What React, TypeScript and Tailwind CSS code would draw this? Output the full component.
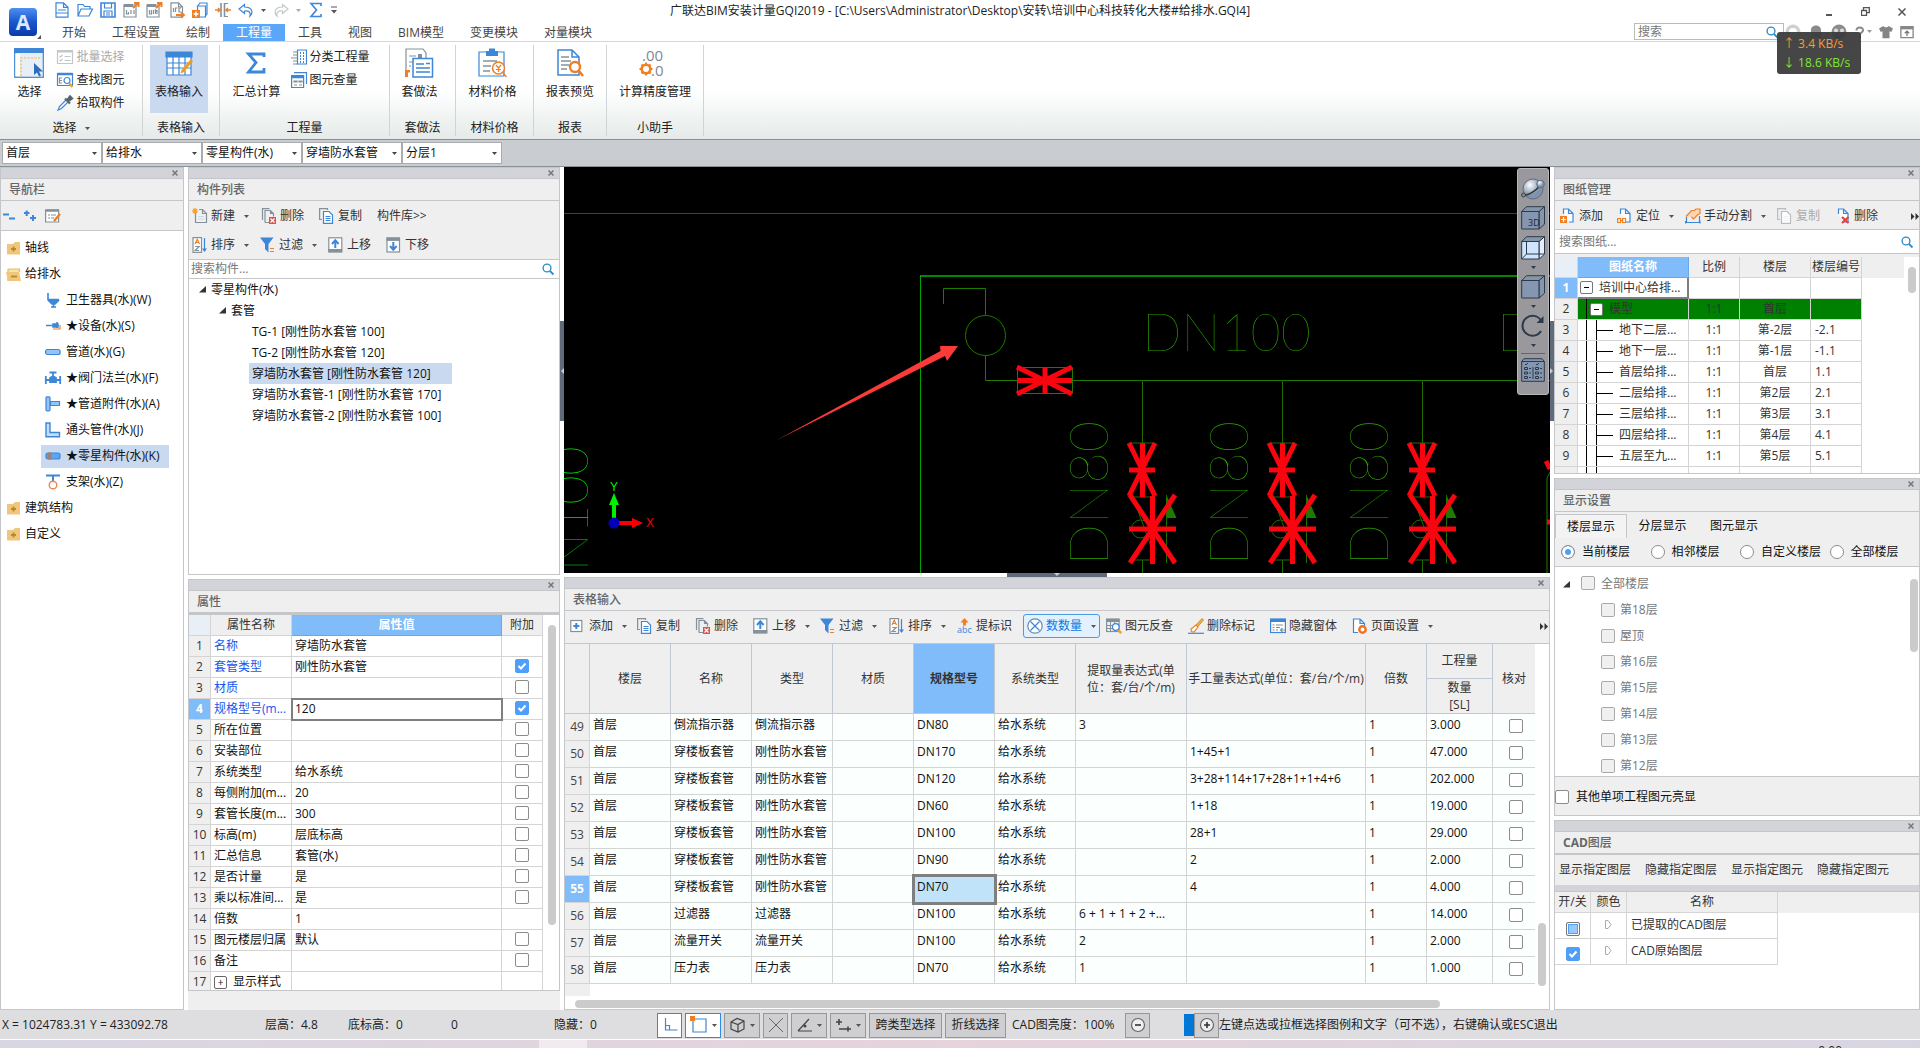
import React from 'react';

const BLUE = '#3d86d8';
const GRAY = '#84919a';
const ORANGE = '#f07f24';

interface IconProps {
  size?: number;
  box?: number;
  children: React.ReactNode;
}

const Icon = ({ size = 16, box = 16, children }: IconProps) => (
  <svg width={size} height={size} viewBox={`0 0 ${box} ${box}`} fill="none" strokeWidth="1.2" className="shrink-0 overflow-visible" aria-hidden="true">
    {children}
  </svg>
);

// ---------- toolbar icons ----------

const NewIcon = () => (
  <Icon>
    <path d="M3.500 5V14.500h11V5.500L10.500 1.500H7M10.500 1.500v4h4" stroke={GRAY} fill="#eef0f5" />
    <path d="M6 8.500h6M6 11h6" stroke="#d4d8dc" />
    <path d="M3 0v6M0 3h6M1 1l4 4M5 1L1 5" stroke="#f5a11c" />
  </Icon>
);

const DeleteIcon = () => (
  <Icon>
    <path d="M1.500 12V.600h7M4 14.500V2.500h5.500l3 3v3M9.500 2.500v3h3M4 14.500H8" stroke={GRAY} />
    <rect x="8" y="9" width="7" height="7" fill="#d9534f" />
    <path d="M9.500 10.500l4 4M13.500 10.500l-4 4" stroke="#fff" />
  </Icon>
);

const CopyIcon = ({ muted = false }: { muted?: boolean }) => (
  <Icon>
    <path d="M3 11.500H.600V.600H8.500V2" stroke={muted ? '#b9bdc0' : GRAY} />
    <path d="M4.500 3.500h5.500l3.500 3.500v8.400h-9z" stroke={muted ? '#b9bdc0' : BLUE} fill="#fff" />
    <path d="M6.500 8.500h5M6.500 10.500h5M6.500 12.500h5" stroke={muted ? '#efefef' : BLUE} />
  </Icon>
);

const SortIcon = () => (
  <Icon>
    <rect x="1" y=".6" width="8.500" height="14.800" stroke={GRAY} fill="#fff" />
    <path d="M3 7l2.200-4.800L7.500 7M3.800 5.500h3" stroke={ORANGE} />
    <path d="M3.200 9.500h4l-4 4h4" stroke={GRAY} />
    <path d="M12.500 1v13" stroke={BLUE} />
    <path d="M10 11.500h5L12.500 15z" fill={BLUE} />
  </Icon>
);

const FilterIcon = () => (
  <Icon>
    <path d="M0 .5h13.500L8.500 7v8.500L5 12V7z" fill={BLUE} />
    <path d="M10 11.500h4M10 14.500h4" stroke={ORANGE} />
  </Icon>
);

const UpIcon = () => (
  <Icon>
    <rect x=".8" y=".8" width="13" height="14" stroke={GRAY} fill="#fff" />
    <path d="M.2 12h14v3.400H.2z" fill={GRAY} />
    <path d="M7.300 11V4M4 7l3.300-3.800L10.600 7" stroke={BLUE} strokeWidth="2" />
  </Icon>
);

const DownIcon = () => (
  <Icon>
    <rect x="1" y="1" width="12.500" height="14" stroke={GRAY} fill="#fff" />
    <path d="M.5.500h13.500v3.400H.500z" fill={GRAY} />
    <path d="M7.300 5v7M4 9l3.300 3.800L10.600 9" stroke={BLUE} strokeWidth="2" />
  </Icon>
);

const AddBoxIcon = () => (
  <Icon>
    <rect x=".8" y="2.500" width="11" height="11" stroke={GRAY} fill="#fff" />
    <path d="M6.300 5v6M3.300 8h6" stroke={BLUE} strokeWidth="2" />
  </Icon>
);

const MarkIcon = () => (
  <Icon>
    <path d="M3.500 4.500L7.500 0l4 4.500H9v3H6v-3z" fill={ORANGE} />
    <text x="0" y="15" fontSize="9" fill={BLUE} strokeWidth="0" fontFamily="Open Sans">abc</text>
  </Icon>
);

const CountIcon = () => (
  <Icon>
    <circle cx="8" cy="8" r="7.200" stroke="#6f8ba3" fill="#fff" />
    <path d="M3.500 3.500l9 9M12.500 3.500l-9 9" stroke={BLUE} />
  </Icon>
);

const TableFindIcon = () => (
  <Icon>
    <rect x=".6" y="1" width="12.500" height="12.500" stroke={GRAY} />
    <path d="M.5 1h13v3H.5z" fill={GRAY} />
    <path d="M.5 7.500h12M.5 10.500h12M4.500 2v11M8.700 2v11" stroke={GRAY} strokeWidth="1" />
    <circle cx="9.800" cy="9" r="3.300" stroke={BLUE} fill="#fff" />
    <path d="M12.200 12l3 3.200" stroke="#f5a11c" strokeWidth="2.500" />
  </Icon>
);

const BrushIcon = () => (
  <Icon>
    <path d="M0 15.300h16" stroke={BLUE} />
    <path d="M8 7l6-6.500 1.500 1.500L9.500 9z" fill="#f5b12c" stroke="#b1772c" strokeWidth=".7" />
    <path d="M3 11l5-4 2 2-4 5-2.500-.5z" fill="#fff" stroke={ORANGE} />
  </Icon>
);

const HideIcon = () => (
  <Icon>
    <rect x=".6" y="1" width="14.800" height="13.500" stroke={BLUE} fill="#fff" />
    <path d="M.5 1h15v3H.5z" fill={BLUE} />
    <path d="M2.500 7h2M6 7h7M2.500 9.500h2M6 9.500h4M2.500 12h2M6 12h2M15 12h-4M12.500 10l-2 2 2 2" stroke={GRAY} />
  </Icon>
);

const PageSetIcon = () => (
  <Icon>
    <path d="M6 14.500H1.500V1H8l4.500 4.500V8M8 1v4.500h4.500" stroke={BLUE} fill="#fff" />
    <circle cx="10.500" cy="11.500" r="3.200" stroke="#f2701d" strokeWidth="2.400" fill="#fff" />
  </Icon>
);

const SheetIcon = ({ kind }: { kind: 'add' | 'locate' | 'remove' }) => (
  <Icon>
    <path d="M3.500 6V1h5l4.500 4.500v8.500H9M8.500 1v4.500H13" stroke={BLUE} fill="#fff" />
    {kind === 'add' && <><path d="M0 8h7v7H0z" fill={ORANGE} /><path d="M3.500 9v5M1 11.500h5" stroke="#fff" /></>}
    {kind === 'locate' && <path d="M.6 10.500h3v4h-3zM5.600 10.500h3v4h-3zM3 12.500h3" stroke={ORANGE} />}
    {kind === 'remove' && <path d="M7 9l6.500 6M13.500 9L7 15" stroke="#e5403b" strokeWidth="2.200" />}
  </Icon>
);

const SplitIcon = () => (
  <Icon>
    <path d="M1.500 9v5.500h13V8" stroke={BLUE} />
    <path d="M0 14.500h15.500M.6 13v2.500M15 13v2.500" stroke={BLUE} />
    <path d="M1 8.500L6.500 2.500h3L11 1h4v4.500L12.500 7l-4 4-2-2" fill="#fbd5b5" stroke={ORANGE} />
  </Icon>
);

const SearchIcon = () => (
  <Icon size={12} box={12}>
    <circle cx="5" cy="5" r="3.900" stroke="#2f8cc9" strokeWidth="1.400" />
    <path d="M8 8l3.500 3.500" stroke="#2f8cc9" strokeWidth="1.800" />
  </Icon>
);

const Caret = ({ color = '#555' }: { color?: string }) => (
  <svg width="5" height="3" viewBox="0 0 5 3" className="shrink-0" aria-hidden="true"><path d="M0 0h5L2.500 3z" fill={color} /></svg>
);

const TreeArrow = () => (
  <svg width="7" height="7" viewBox="0 0 7 7" className="shrink-0" aria-hidden="true"><path d="M7 0v6.500H0z" fill="#333" /></svg>
);

const MoreIcon = () => (
  <svg width="8" height="7" viewBox="0 0 8 7" className="shrink-0" aria-hidden="true"><path d="M0 0l3.500 3.500L0 7zM4.500 0L8 3.500 4.500 7z" fill="#333" /></svg>
);

// ---------- shared pieces ----------

interface PanelProps {
  title: React.ReactNode;
  className?: string;
  children: React.ReactNode;
}

const Panel = ({ title, className = '', children }: PanelProps) => (
  <section className={`flex min-h-0 flex-col overflow-hidden border border-[#c4c6ca] bg-[#efefef] ${className}`}>
    <div className="flex h-[11px] shrink-0 items-center justify-end border-b border-[#c4c6ca] bg-[#d3d4da] pr-[5px]">
      <button type="button" aria-label="关闭">
        <svg width="6" height="6" viewBox="0 0 6 6"><path d="M.5.500l5 5M5.500.500l-5 5" stroke="#777" strokeWidth="1.500" /></svg>
      </button>
    </div>
    <h2 className="h-[22px] shrink-0 border-b border-[#c4c6ca] pl-2 font-medium leading-[21px] text-[#666]">{title}</h2>
    {children}
  </section>
);

interface ToolProps {
  icon?: React.ReactNode;
  label: string;
  width: string;
  caret?: boolean;
  disabled?: boolean;
}

const Tool = ({ icon, label, width, caret, disabled }: ToolProps) => (
  <button type="button" disabled={disabled} className={`flex h-6 shrink-0 items-center gap-[3px] whitespace-nowrap ${disabled ? 'text-[#aaa]' : 'text-[#333]'} ${width}`}>
    {icon}
    {label}
    {caret && <span className="pl-[6px]"><Caret /></span>}
  </button>
);

interface CheckProps {
  label: string;
  on?: boolean;
  disabled?: boolean;
}

const Check = ({ label, on = false, disabled = false }: CheckProps) => (
  <span className="relative inline-block size-3.5 shrink-0 align-top">
    <input
      type="checkbox"
      aria-label={label}
      defaultChecked={on}
      disabled={disabled}
      className="peer block size-3.5 appearance-none rounded-[2px] border border-[#8c8c8c] bg-white checked:border-[#4e9ffa] checked:bg-[#4e9ffa] disabled:border-[#aaa] disabled:bg-[#f0f0f0]"
    />
    <svg className="pointer-events-none absolute inset-0 hidden peer-checked:block" width="14" height="14" viewBox="0 0 14 14">
      <path d="M3.500 7L6 9.500l4.500-5" stroke="#fff" strokeWidth="2" fill="none" />
    </svg>
  </span>
);

// ---------- header ----------

const quickIcons = [
  <Icon key="new"><path d="M2 .8h7.500L14 5.300v9.900H2zM9.500.8v4.500H14M4 8h8M2 11h12" stroke={BLUE} /></Icon>,
  <Icon key="open"><path d="M1 14V2.500h5l1.500 2H13V7M1 14L4 7h11.500L12 14z" stroke={BLUE} /></Icon>,
  <Icon key="save"><path d="M1 1h14v14H1z" stroke={BLUE} strokeWidth="1.600" /><path d="M4.500 1v5h7V1M4 15V9h8v6M6 11h4M6 13h4" stroke={BLUE} /></Icon>,
  <Icon key="gqi"><path d="M1 3h12v12H1z" stroke={GRAY} fill="#fff" /><path d="M1 2h9v3H1z" fill={GRAY} /><path d="M3.500 8v4h2v-2M8 8v4M11 8v4" stroke={GRAY} /><path d="M10 6l4.500-4.500M11 1h4.500v4" stroke={ORANGE} strokeWidth="2" /></Icon>,
  <Icon key="bim"><path d="M1 3h12v12H1z" stroke={GRAY} fill="#fff" /><path d="M1 2h9v3H1z" fill={GRAY} /><path d="M3.500 8v4h2v-4M7.500 8v4M9.500 12V8l1.500 2V8v4" stroke={GRAY} /><path d="M10 6l4.500-4.500M11 1h4.500v4" stroke={ORANGE} strokeWidth="2" /></Icon>,
  <Icon key="ifc"><path d="M2 .8h7.500l4 4v10.400H2zM9.500.8v4h4" stroke={GRAY} /><path d="M4.500 6v4M6.500 10V6h2M12 6h-2v4h2" stroke={GRAY} /><path d="M7 13h7M12 10.500l3 2.500-3 2.500" stroke={ORANGE} strokeWidth="1.800" /></Icon>,
  <Icon key="cube"><path d="M6 3.500L8 1h7v11l-2 2.500M5.500 4h8v11h-8z" stroke={BLUE} fill="#fff" /><path d="M0 8h8v8H0z" fill={ORANGE} /><path d="M4 9.500v5M1.500 12h5" stroke="#fff" strokeWidth="1.500" /></Icon>,
  <Icon key="split"><path d="M6 1v14M9.500 1v14" stroke={GRAY} strokeWidth="1.600" /><path d="M0 8h5M3 6l2 2-2 2M16 8h-5M13 6l-2 2 2 2" stroke={ORANGE} strokeWidth="1.500" /><path d="M10 1.500h3M10 14.500h3" stroke={GRAY} /></Icon>,
];

const UndoIcon = ({ color, flip }: { color: string; flip?: boolean }) => (
  <Icon>
    <path d={flip ? 'M9.500 2.500L15 7l-5.500 4.500V9C5 8.500 3 10.500 4 14 0 10 2.500 5 9.500 5z' : 'M6.500 2.500L1 7l5.500 4.500V9c4.500-.5 6.500 1.500 5.500 5 4-4 1.500-9-5.500-9z'} stroke={color} />
  </Icon>
);

const tabs = ['开始', '工程设置', '绘制', '工程量', '工具', '视图', 'BIM模型', '变更模块', '对量模块'];

const Header = () => (
  <header className="relative flex h-[42px] items-stretch border-b border-[#d5d7d9] bg-white">
    <div className="relative w-[45px] shrink-0 pl-[9px] pt-2">
      <svg width="28" height="28" viewBox="0 0 28 28">
        <defs>
          <linearGradient id="logo" x1="0" y1="0" x2="0" y2="1"><stop offset="0" stopColor="#4f8ff0" /><stop offset=".5" stopColor="#1a56cf" /><stop offset="1" stopColor="#0c3aa6" /></linearGradient>
        </defs>
        <rect width="28" height="28" rx="4" fill="url(#logo)" />
        <text x="14" y="21.500" textAnchor="middle" fontSize="21" fontWeight="700" fill="#dceaff" fontFamily="Open Sans">A</text>
      </svg>
      <svg width="4" height="4" viewBox="0 0 4 4" className="absolute bottom-[2px] right-1"><path d="M4 0v4H0z" fill="#555" /></svg>
    </div>
    <div className="flex flex-col">
      <div className="flex h-6 items-center gap-[7px] pb-1 pl-[9px]">
        {quickIcons}
        <UndoIcon color={BLUE} />
        <Caret />
        <UndoIcon color="#c3c7ca" flip />
        <Caret color="#aaa" />
        <Icon><path d="M13 4V1.500H3L8.500 8 3 14.500h10V12" stroke={BLUE} strokeWidth="1.600" /></Icon>
        <svg width="6" height="8" viewBox="0 0 6 8"><path d="M0 1h6" stroke="#555" /><path d="M0 4h6L3 7.500z" fill="#555" /></svg>
      </div>
      <nav className="flex pl-1">
        {tabs.map((tab) => (
          <a key={tab} href="#" className={`px-[13px] leading-[17px] ${tab === '工程量' ? 'bg-[#5aa6f8] text-white' : 'text-[#444]'}`}>{tab}</a>
        ))}
      </nav>
    </div>
    <h1 className="absolute left-1/2 top-[2px] -translate-x-1/2 whitespace-nowrap leading-[18px] text-[#222]">
      广联达BIM安装计量GQI2019 - [C:\Users\Administrator\Desktop\安转\培训中心科技转化大楼#给排水.GQI4]
    </h1>
    <div className="ml-auto flex flex-col items-end pr-[6px]">
      <div className="flex h-[23px] items-center gap-7 pr-2 text-[#666]">
        <button type="button" aria-label="最小化"><svg width="8" height="10" viewBox="0 0 8 10"><path d="M1 8h6" stroke="#555" strokeWidth="2" /></svg></button>
        <button type="button" aria-label="还原"><svg width="9" height="9" viewBox="0 0 9 9"><path d="M.5 3.500h5v5h-5zM2.500 3V.700h5.800v5H6" stroke="#555" fill="none" strokeWidth="1.300" /></svg></button>
        <button type="button" aria-label="关闭窗口"><svg width="8" height="8" viewBox="0 0 8 8"><path d="M.5.500l7 7M7.500.500l-7 7" stroke="#555" strokeWidth="1.500" /></svg></button>
      </div>
      <div className="flex h-[17px] items-center">
        <label className="flex h-[17px] w-[150px] items-center border border-[#bbb] bg-white pl-[3px] pr-[5px]">
          <input aria-label="搜索" placeholder="搜索" className="w-full min-w-0 outline-none placeholder:text-[#777]" />
          <SearchIcon />
        </label>
        <div className="flex items-center gap-[7px] pl-px">
          <Icon><circle cx="8" cy="8" r="7.500" fill="#d0d0d0" /><circle cx="8" cy="8" r="4" fill="#fff" /></Icon>
          <Icon><path d="M3 12V6c0-6 10-6 10 0v6l1.500 1.500h-13z" fill="#8a8a8a" /></Icon>
          <Icon><circle cx="8" cy="8" r="7.500" fill="#8c8c8c" /><circle cx="5" cy="6.500" r="2" fill="#ddd" /><circle cx="11" cy="6.500" r="2" fill="#ddd" /><path d="M4 11c2 2.500 6 2.500 8 0" stroke="#333" /></Icon>
          <div className="flex items-center gap-px">
            <Icon size={12} box={12}><path d="M2.500 4.500C2 .5 9.500.5 9 4.500 9 6.500 6 6.500 6 8.500M6 10v2" stroke="#888" strokeWidth="2" /></Icon>
            <Caret color="#999" />
          </div>
          <Icon size={14}><path d="M5 1L0 4l2 4 2-1v8h8V7l2 1 2-4-5-3c-1 2-5 2-6 0z" fill="#858585" /></Icon>
          <Icon size={14}><path d="M1 2h14v12.500H1z" stroke="#888" strokeWidth="1.500" /><path d="M1 2h14v3H1z" fill="#888" /><path d="M8 12.500V7.500M5.500 9.500L8 7l2.500 2.500" stroke="#777" strokeWidth="1.500" /></Icon>
        </div>
      </div>
    </div>
    {/* network speed widget */}
    <div className="absolute right-[59px] top-8 z-10 h-[42px] w-[84px] rounded-[3px] bg-[#3c3c3cf2] pl-[6px] pt-[2px] leading-[19px]">
      <div className="text-[#ff9a2e]">↑ 3.4 KB/s</div>
      <div className="text-[#7eea2c]">↓ 18.6 KB/s</div>
    </div>
  </header>
);

// ---------- ribbon ----------

const Group = ({ label, width, caret, children }: { label: string; width: string; caret?: boolean; children: React.ReactNode }) => (
  <div className={`flex shrink-0 flex-col border-r border-[#d0d4d6] ${width}`}>
    <div className="flex h-[77px] justify-center">{children}</div>
    <div className="flex items-center justify-center gap-2 leading-4 text-[#222]">
      {label}
      {caret && <Caret />}
    </div>
  </div>
);

const BigButton = ({ icon, label, active }: { icon: React.ReactNode; label: string; active?: boolean }) => (
  <button type="button" className={`flex h-[68px] shrink-0 flex-col items-center gap-[6px] whitespace-nowrap px-[5px] pt-[3px] leading-4 text-[#222] ${active ? 'bg-[#c8d9f0]' : ''}`}>
    <span className="flex h-[30px] items-center">{icon}</span>
    {label}
  </button>
);

const SmallButton = ({ icon, label, muted }: { icon: React.ReactNode; label: string; muted?: boolean }) => (
  <button type="button" disabled={muted} className={`flex h-[23px] items-center gap-[3px] whitespace-nowrap ${muted ? 'text-[#aaa]' : 'text-[#222]'}`}>
    {icon}
    {label}
  </button>
);

const Ribbon = () => (
  <div className="flex h-[98px] border-b border-[#888e94] bg-linear-to-b from-white from-50% to-[#e5eae9] py-[3px]">
    <Group label="选择" width="w-[143px]" caret>
      <div className="flex gap-2 pr-2">
        <BigButton label="选择" icon={
          <Icon size={30} box={30}>
            <rect x=".7" y=".7" width="28.600" height="28.600" stroke={BLUE} fill="#e8eef8" />
            <path d="M0 0h30v5H0z" fill={BLUE} />
            <path d="M7 28V10h21" stroke="#f0b73c" strokeDasharray="2 1.500" />
            <path d="M1.500 6H6v22H1.500z" fill="#fff" />
            <path d="M20 15v12l3-2.500 2 4 2-1-2-4h4z" fill="#2b6fb8" />
          </Icon>} />
        <div className="flex flex-col">
          <SmallButton muted label="批量选择" icon={<Icon><path d="M.5 1.500h15v13H.5z" stroke="#c4c7ca" /><path d="M.5 2.500h15" stroke="#c4c7ca" strokeWidth="2" /><path d="M2.500 7l1 1 2-2M2.500 11l1 1 2-2M7.500 7.500h6M7.500 11.500h6" stroke="#c4c7ca" /></Icon>} />
          <SmallButton label="查找图元" icon={<Icon><path d="M.5 1.500h15v12H.5z" stroke={BLUE} /><path d="M.5 2h15" stroke={BLUE} strokeWidth="2.500" /><path d="M5 6H2.500v5H5M3 8.500h2" stroke={GRAY} /><circle cx="10" cy="8.500" r="3" stroke={BLUE} fill="#fff" /><path d="M12 11l3.500 4" stroke="#f5a11c" strokeWidth="2" /></Icon>} />
          <SmallButton label="拾取构件" icon={<Icon><path d="M9 5L2.500 11.500 1 15l3.500-1.500L11 7" stroke={BLUE} fill="#fff" /><path d="M8 3.500l5 5M10 5.500l3-4 2 2-4 3z" stroke="#59656e" strokeWidth="2.200" /></Icon>} />
        </div>
      </div>
    </Group>
    <Group label="表格输入" width="w-[77px]">
      <div className="pr-1">
        <BigButton active label="表格输入" icon={
          <Icon size={28} box={28}>
            <path d="M2 4h24v22H2z" fill="#fff" stroke={BLUE} />
            <path d="M1 3h26v5H1zM2 14h24M2 19h24M8 8v18M14 8v18M20 8v18" fill={BLUE} stroke={BLUE} />
            <path d="M26 10l2 2-9 11-3.500 1.500L16.500 21z" fill="#f59a1c" />
          </Icon>} />
      </div>
    </Group>
    <Group label="工程量" width="w-[170px]">
      <div className="flex gap-[5px] pr-3">
        <BigButton label="汇总计算" icon={<Icon size={24} box={24}><path d="M20 6V3H4.500l7.500 8.500L4.500 21H20v-4" stroke={BLUE} strokeWidth="2.800" /></Icon>} />
        <div className="flex flex-col">
          <SmallButton label="分类工程量" icon={<Icon><path d="M2 3h5M2 6h5M0 9h7M2 12h5M2 15h5" stroke={GRAY} /><path d="M6.500 1h9v14h-9z" stroke={BLUE} /><path d="M9 4h1M12 4h1M9 7h1M12 7h1M9 10h1M12 10h1M9 13h1M12 13h1" stroke={BLUE} strokeWidth="2" /></Icon>} />
          <SmallButton label="图元查量" icon={<Icon><path d="M3 .6h12.500V12M.6 3.500h12v12H.6z" stroke={BLUE} fill="#fff" /><path d="M0 5h13" stroke={BLUE} strokeWidth="2.500" /><path d="M3 9h3v1H3zM8 9h3v1H8zM3 13h3M8 13h3" stroke={GRAY} /></Icon>} />
        </div>
      </div>
    </Group>
    <Group label="套做法" width="w-[66px]">
      <div className="pr-[6px]">
        <BigButton label="套做法" icon={
          <Icon size={30} box={30}>
            <path d="M2 24V1h17l3 4v5" stroke={GRAY} fill="#fff" />
            <path d="M5 8h7M5 14h4M5 18h2" stroke={GRAY} /><path d="M14 6h4v4h-4z" fill={GRAY} />
            <path d="M9 10.500h19.500V29H9z" stroke={BLUE} fill="#fff" strokeWidth="1.500" />
            <path d="M12 16h8M12 20h14M12 24h14M22 15.500h4" stroke={BLUE} strokeWidth="1.600" />
            <path d="M1 22h5v2.500H4V29H1z" fill={ORANGE} />
          </Icon>} />
      </div>
    </Group>
    <Group label="材料价格" width="w-[78px]">
      <div className="pr-1">
        <BigButton label="材料价格" icon={
          <Icon size={30} box={30}>
            <path d="M2 4h25v24H2z" stroke={BLUE} fill="#fff" />
            <path d="M9 3h3V.500h6V3h3v5H9z" fill={BLUE} />
            <path d="M6 13h14M6 18h8M6 23h7" stroke={GRAY} strokeWidth="1.500" />
            <circle cx="21.500" cy="20" r="6" stroke={ORANGE} fill="#fff" strokeWidth="1.500" />
            <path d="M26 25l3.500 4M19 17l2.500 3 2.500-3M21.500 20v4M19 21.500h5" stroke={ORANGE} />
          </Icon>} />
      </div>
    </Group>
    <Group label="报表" width="w-[73px]">
      <BigButton label="报表预览" icon={
        <Icon size={30} box={30}>
          <path d="M3 2h14l7 7v18H3zM17 2v7h7" stroke={BLUE} fill="#fff" strokeWidth="1.500" />
          <path d="M6 9h8M6 13h10M6 17h8M6 21h6" stroke={GRAY} strokeWidth="1.500" />
          <circle cx="20" cy="19" r="5" stroke={ORANGE} fill="#fff" strokeWidth="2.400" />
          <path d="M24 23l4 5" stroke={ORANGE} strokeWidth="2.600" />
        </Icon>} />
    </Group>
    <Group label="小助手" width="w-[97px]">
      <BigButton label="计算精度管理" icon={
        <Icon size={30} box={30}>
          <text x="2" y="13" fontSize="15" fill="#7e8a94" strokeWidth="0" fontFamily="Open Sans">.00</text>
          <text x="11" y="28" fontSize="15" fill="#7e8a94" strokeWidth="0" fontFamily="Open Sans">.0</text>
          <circle cx="6" cy="21" r="4.300" stroke={ORANGE} strokeWidth="2.600" />
          <path d="M6 14.500v2M6 25.500v2M-.5 21h2M10.500 21h2M1.500 16.500l1 1M9.500 24.500l1 1M1.500 25.500l1-1M9.500 17.500l1-1" stroke={ORANGE} strokeWidth="2" />
        </Icon>} />
    </Group>
  </div>
);

const filters = ['首层', '给排水', '零星构件(水)', '穿墙防水套管', '分层1'];

const FilterBar = () => (
  <div className="flex h-[27px] items-center border-b border-[#8b9296] bg-[#c9ccd1] pl-[2px]">
    {filters.map((value) => (
      <div key={value} className="relative flex w-[100px] items-center">
        <select aria-label={value} className="h-[22px] w-full appearance-none border border-[#a9abae] bg-white px-[3px] text-[#111] outline-none">
          <option>{value}</option>
        </select>
        <span className="pointer-events-none absolute right-[5px]"><Caret color="#444" /></span>
      </div>
    ))}
  </div>
);

// ---------- left column ----------

const FolderIcon = ({ open }: { open?: boolean }) => (
  <Icon>
    {open ? (
      <><path d="M2 15V3.500l2-.5h9.500V6" fill="#f7e2a8" stroke="#e0bb6a" /><path d="M0 6h13l2 9H2z" fill="#efc67c" /><path d="M5 10.500h6" stroke="#b98a2c" strokeWidth="1.800" /></>
    ) : (
      <><path d="M1 4h6l2-2h5v12.500H1z" fill="#efc67c" /><path d="M7.500 6.500v5M5 9h5" stroke="#b98a2c" strokeWidth="1.800" /></>
    )}
  </Icon>
);

const navItems = [
  { label: '卫生器具(水)(W)', icon: <path d="M3 1v7M3 7.500h11M4 9h9l-3 3h-3zM6 15h5M8.500 11v4" stroke={BLUE} fill={BLUE} strokeWidth="1.600" /> },
  { label: '★设备(水)(S)', icon: <><path d="M1 7.500h6M8 6h5v3H8zM12 4v6" stroke={BLUE} fill={BLUE} strokeWidth="1.600" /><path d="M8 11h7V7" stroke={ORANGE} /></> },
  { label: '管道(水)(G)', icon: <rect x=".6" y="5.500" width="14.500" height="5" rx="2" stroke={BLUE} fill="#93c4f8" /> },
  { label: '★阀门法兰(水)(F)', icon: <path d="M4.500 2.500h7M8 2v5M.8 6v8M15.200 6v8M1 10h14M5 12V8l3-2 3 2v4z" stroke={BLUE} fill={BLUE} strokeWidth="1.800" /> },
  { label: '★管道附件(水)(A)', icon: <><rect x="1" y=".8" width="4" height="14" rx="1" stroke={BLUE} fill="#93c4f8" /><path d="M5.500 5.500h9v4h-9z" stroke={BLUE} fill="#93c4f8" /></> },
  { label: '通头管件(水)(J)', icon: <path d="M1 1h4v9.500h9.500v4.200H1z" stroke={BLUE} fill="#c3defb" strokeWidth="1.400" /> },
  { label: '★零星构件(水)(K)', icon: <><rect x="1" y="5" width="14" height="6" rx="2" stroke={BLUE} fill="#5aa6f0" /><rect x="2.500" y="4.500" width="4" height="7" fill="#a0807a" /></> },
  { label: '支架(水)(Z)', icon: <><path d="M1 1.500h14M8 2v5" stroke={BLUE} strokeWidth="2" /><circle cx="8" cy="11" r="3.800" stroke="#ee8650" strokeWidth="1.400" /></> },
];

const NavRow = ({ label, open }: { label: string; open?: boolean }) => (
  <a href="#" className="flex h-[26px] items-center gap-[3px] pl-[5px]"><FolderIcon open={open} />{label}</a>
);

const NavPanel = () => (
  <Panel title="导航栏" className="w-[184px] shrink-0">
    <div className="flex h-[30px] shrink-0 items-center gap-[5px] border-b border-[#c4c6ca] pl-[2px]">
      <button type="button" aria-label="全部折叠"><Icon><path d="M0 6.500h6M6 10.500h6" stroke={BLUE} strokeWidth="2" /></Icon></button>
      <button type="button" aria-label="全部展开"><Icon><path d="M0 5h5.500M2.700 2.500v5.500M6 10h6M9 7v6" stroke={BLUE} strokeWidth="2" /></Icon></button>
      <button type="button" aria-label="编辑"><Icon><path d="M.6 2h13v12H.6z" stroke={GRAY} fill="#fff" /><path d="M.5 2.500h13.500" stroke={GRAY} strokeWidth="2.500" /><path d="M3 7h2M6 7h5M3 10h2M6 10h3" stroke={GRAY} /><path d="M15 6l-6 7" stroke={ORANGE} strokeWidth="2.400" /></Icon></button>
    </div>
    <div className="grow bg-white pt-1">
      <NavRow label="轴线" />
      <NavRow label="给排水" open />
      {navItems.map((item) => (
        <a key={item.label} href="#" className="flex h-[26px] items-center pl-10">
          <span className={`flex h-[23px] w-32 items-center gap-[5px] pl-1 ${item.label.includes('(K)') ? 'bg-[#c9d9f0]' : ''}`}>
            <Icon>{item.icon}</Icon>
            {item.label}
          </span>
        </a>
      ))}
      <NavRow label="建筑结构" />
      <NavRow label="自定义" />
    </div>
  </Panel>
);

const components = [
  'TG-1 [刚性防水套管 100]',
  'TG-2 [刚性防水套管 120]',
  '穿墙防水套管 [刚性防水套管 120]',
  '穿墙防水套管-1 [刚性防水套管 170]',
  '穿墙防水套管-2 [刚性防水套管 100]',
];

const ComponentPanel = () => (
  <Panel title="构件列表" className="grow">
    <div className="flex shrink-0 flex-col gap-[5px] pb-[2px] pl-[3px] pt-[3px]">
      <div className="flex">
        <Tool icon={<NewIcon />} label="新建" width="w-[69px]" caret />
        <Tool icon={<DeleteIcon />} label="删除" width="w-[58px]" />
        <Tool icon={<CopyIcon />} label="复制" width="w-[58px]" />
        <Tool label="构件库>>" width="w-[70px]" />
      </div>
      <div className="flex">
        <Tool icon={<SortIcon />} label="排序" width="w-[68px]" caret />
        <Tool icon={<FilterIcon />} label="过滤" width="w-[68px]" caret />
        <Tool icon={<UpIcon />} label="上移" width="w-[58px]" />
        <Tool icon={<DownIcon />} label="下移" width="w-[58px]" />
      </div>
    </div>
    <label className="flex h-5 shrink-0 items-center border-y border-[#c4c6ca] bg-white pl-[2px] pr-[5px]">
      <input aria-label="搜索构件" placeholder="搜索构件..." className="min-w-0 grow outline-none placeholder:text-[#777]" />
      <SearchIcon />
    </label>
    <ul className="grow bg-white leading-[21px]">
      <li className="flex items-center gap-[5px] pl-[10px]"><TreeArrow />零星构件(水)</li>
      <li className="flex items-center gap-[5px] pl-[30px]"><TreeArrow />套管</li>
      {components.map((name, index) => (
        <li key={name} className="pl-[60px]">
          <span className={`block w-[203px] whitespace-nowrap pl-[3px] ${index === 2 ? 'bg-[#c9d9f0]' : ''}`}>{name}</span>
        </li>
      ))}
    </ul>
  </Panel>
);

interface Property {
  name: string;
  value?: string;
  check?: 'on' | 'off';
  blue?: boolean;
}

const properties: Property[] = [
  { name: '名称', value: '穿墙防水套管', blue: true },
  { name: '套管类型', value: '刚性防水套管', check: 'on', blue: true },
  { name: '材质', check: 'off', blue: true },
  { name: '规格型号(m...', value: '120', check: 'on', blue: true },
  { name: '所在位置', check: 'off' },
  { name: '安装部位', check: 'off' },
  { name: '系统类型', value: '给水系统', check: 'off' },
  { name: '每侧附加(m...', value: '20', check: 'off' },
  { name: '套管长度(m...', value: '300', check: 'off' },
  { name: '标高(m)', value: '层底标高', check: 'off' },
  { name: '汇总信息', value: '套管(水)', check: 'off' },
  { name: '是否计量', value: '是', check: 'off' },
  { name: '乘以标准间...', value: '是', check: 'off' },
  { name: '倍数', value: '1' },
  { name: '图元楼层归属', value: '默认', check: 'off' },
  { name: '备注', check: 'off' },
  { name: '显示样式' },
];

const cell = 'border-b border-r border-[#d4d4d4]';
const head = 'border-b border-r border-[#d4d4d4] bg-[#efefef] font-normal text-[#333]';

const PropertyPanel = () => (
  <div className="h-[431px] shrink-0 bg-[#efefef]">
    <Panel title="属性" className="h-[412px]">
      <div className="flex min-h-0 grow border-t-2 border-[#c4c6ca] bg-white">
        <table className="h-fit grow table-fixed border-separate border-spacing-0 whitespace-nowrap leading-[18px]">
          <colgroup><col className="w-[22px]" /><col className="w-[81px]" /><col /><col className="w-[41px]" /></colgroup>
          <thead>
            <tr className="h-[21px]">
              <th className={`${cell} bg-[#e9eff7]`} aria-label="序号" />
              <th className={head}>属性名称</th>
              <th className="border-b border-r border-[#6aa7ea] bg-[#80bbfa] font-semibold text-white">属性值</th>
              <th className={head}>附加</th>
            </tr>
          </thead>
          <tbody>
            {properties.map((row, index) => {
              const selected = index === 3;
              return (
                <tr key={row.name} className="h-[21px]">
                  <td className={`${cell} text-center ${selected ? 'bg-[#80bbfa] font-bold text-white' : 'bg-[#efefef] text-[#333]'}`}>{index + 1}</td>
                  <td className={`${cell} pl-[3px] ${row.blue ? 'text-[#1a55ee]' : ''}`}>
                    {index === 16 ? (
                      <span className="flex items-center gap-[6px]">
                        <span className="flex size-[13px] items-center justify-center rounded-[2px] border border-[#666] text-[10px] leading-none">+</span>
                        {row.name}
                      </span>
                    ) : row.name}
                  </td>
                  <td className={`${cell} pl-[3px] ${selected ? 'outline-2 -outline-offset-1 outline-[#7f7f7f]' : ''}`}>{row.value}</td>
                  <td className={`${cell} pt-[2px] text-center align-top`}>
                    {row.check && <Check label={row.name} on={row.check === 'on'} />}
                  </td>
                </tr>
              );
            })}
          </tbody>
        </table>
        <div className="w-4 shrink-0 pl-[5px] pt-[10px]"><div className="h-[300px] w-2 rounded-full bg-[#cbcbcb]" /></div>
      </div>
    </Panel>
  </div>
);

// ---------- drawing canvas ----------

const Riser = ({ x }: { x: number }) => (
  <g transform={`translate(${x} 0)`}>
    <g stroke="#1f6b00" fill="none">
      <path d="M88.500 213v63M88.500 393v13M75 276h26M80 330h16M80 393h20M112.500 328v68" />
      <circle cx="86.500" cy="362" r="9" />
      <path d="M79 330l20 55" />
    </g>
    <path d="M112.500 328l10 23h-10z" fill="#1f7a00" />
    <g stroke="#f9040f" strokeWidth="5">
      <path d="M75 276l26 53M101 276l-26 53M88.500 276v54M75 303h26" />
      <path d="M76 328l45 68M121 328l-45 68M98.500 329v68M75 362h47" />
    </g>
    <text transform="translate(54 398) rotate(-90)" fontSize="54" fontWeight="100" fontFamily="Lato" fill="#2ca600">DN80</text>
  </g>
);

const Cube = ({ light, children }: { light?: boolean; children?: React.ReactNode }) => (
  <svg width="24" height="24" viewBox="0 0 24 24" stroke="#2e3a49">
    <path d="M.7 5.500h17.500v17.500H.7z" fill={light ? '#cfe5ff' : '#8496b0'} />
    <path d="M.7 5.500L5.500.700h18l-5.300 4.800z" fill="#8496a8" />
    <path d="M18.200 5.500L23.500.700v17.500l-5.300 4.800z" fill={light ? '#e4f0ff' : '#8496b0'} />
    {light && <path d="M5.500 5.500v12.500h12.700M.7 23l4.800-5M18 18h5" fill="none" />}
    {children}
  </svg>
);

const ViewTools = () => (
  <div className="absolute right-px top-px flex w-8 flex-col items-center gap-[6px] rounded-[3px] border border-[#b7b7ba] bg-[#98989d] pb-3 pt-2">
    <button type="button" aria-label="动态观察" className="block h-[23px]">
      <svg width="24" height="22" viewBox="0 0 24 22">
        <defs><radialGradient id="ball" cx=".35" cy=".3"><stop offset="0" stopColor="#fff" /><stop offset="1" stopColor="#7f93ad" /></radialGradient></defs>
        <circle cx="12" cy="11" r="10" fill="url(#ball)" stroke="#5d6d80" />
        <path d="M2 17c5 1 17-6 17-12" stroke="#333" strokeWidth="1.500" fill="none" />
        <circle cx="19.500" cy="6" r="3.800" fill="url(#ball)" stroke="#5d6d80" />
        <circle cx="2.500" cy="17" r="2" fill="#888" stroke="#444" />
      </svg>
    </button>
    <button type="button" aria-label="三维视图" className="block h-[24px]"><Cube><text x="7" y="20" fontSize="9" fill="#222" strokeWidth="0" fontFamily="Open Sans">3D</text></Cube></button>
    <button type="button" aria-label="线框" className="flex h-[33px] flex-col items-center gap-[6px]"><Cube light /><Caret color="#2e3a49" /></button>
    <button type="button" aria-label="实体" className="flex h-[33px] flex-col items-center gap-[6px]"><Cube /><Caret color="#2e3a49" /></button>
    <button type="button" aria-label="旋转" className="flex h-[33px] flex-col items-center gap-[6px]">
      <svg width="24" height="24" viewBox="0 0 24 24"><path d="M20 17A10 10 0 1 1 20 6.500" stroke="#2e3a49" strokeWidth="2" fill="none" /><path d="M22.500 2v7h-7z" fill="#2e3a49" /></svg>
      <Caret color="#2e3a49" />
    </button>
    <button type="button" aria-label="显示列表" className="block border-t border-[#666] pt-1">
      <svg width="24" height="24" viewBox="0 0 24 24" stroke="#2e3a49" fill="none">
        <path d="M.7 3.500L3 .7h18l2.300 2.800v19.800H.7zM.7 3.500h22.600" fill="#8496b0" />
        <path d="M12 9v12M4 6l1 1 2-2M15 6l1 1 2-2M3.500 9.500h3v2h-3zM3.500 14h3v2h-3zM3.500 18.500h3v2h-3zM14.500 9.500h3v2h-3zM14.500 14h3v2h-3zM14.500 18.500h3v2h-3zM8 10.500h2M8 15h2M8 19.500h2M19 10.500h2M19 15h2M19 19.500h2" />
      </svg>
    </button>
  </div>
);

const Canvas = () => (
  <div className="relative min-h-0 grow overflow-hidden bg-black">
    <svg className="block size-full" viewBox="0 0 986 406" preserveAspectRatio="xMinYMin slice">
      <path d="M0 46.500h986" stroke="#186000" />
      <path d="M356 109h630" stroke="#008600" strokeWidth="2" />
      <path d="M356.500 108v298" stroke="#00a400" />
      <g stroke="#1f7a00" fill="none">
        <path d="M379.500 137v-15.500h42V148M421.500 189v24.500h32M508 213.500h478" />
        <circle cx="421.500" cy="168.500" r="20" />
        <path d="M453.500 200.500h55v26h-55z" />
      </g>
      <path d="M453 200l55 27M508 200l-55 27M453 213.500h55M481 200v27" stroke="#f9040f" strokeWidth="5" />
      <path d="M212 273.500L376.500 184 376 179h18l-11 15-2-5z" fill="#fb3a3a" />
      <g fontSize="52" fontWeight="100" fontFamily="Lato" fill="#2ca600">
        <text x="578" y="184">DN100</text>
        <text x="933" y="184">D</text>
      </g>
      {[490, 630, 770].map((x) => <Riser key={x} x={x} />)}
      <text transform="translate(24 404) rotate(-90)" fontSize="50" fontWeight="100" fontFamily="Lato" fill="#00f000">N100</text>
      <path d="M986 305l-3 6v95" stroke="#1f7a00" fill="none" />
      <path d="M982 294l4 8M983 355h3" stroke="#f9040f" strokeWidth="5" />
      {/* axis gizmo */}
      <path d="M50 356v-20" stroke="#00f000" strokeWidth="4" />
      <path d="M45 338l5-12 5 12z" fill="#00f000" />
      <path d="M50 356h18" stroke="#f80000" strokeWidth="4" />
      <path d="M68 351l11 5-11 5z" fill="#f80000" />
      <circle cx="50" cy="356" r="5.500" fill="#0000b8" />
      <text x="46" y="324" fontSize="12" fill="#00f000" fontFamily="Liberation Sans">Y</text>
      <text x="82" y="360" fontSize="12" fill="#f80000" fontFamily="Liberation Sans">X</text>
    </svg>
    <ViewTools />
  </div>
);

// ---------- quantity table ----------

const quantityRows = [
  ['倒流指示器', '倒流指示器', 'DN80', '3', '', '3.000'],
  ['穿楼板套管', '刚性防水套管', 'DN170', '', '1+45+1', '47.000'],
  ['穿楼板套管', '刚性防水套管', 'DN120', '', '3+28+114+17+28+1+1+4+6', '202.000'],
  ['穿楼板套管', '刚性防水套管', 'DN60', '', '1+18', '19.000'],
  ['穿楼板套管', '刚性防水套管', 'DN100', '', '28+1', '29.000'],
  ['穿楼板套管', '刚性防水套管', 'DN90', '', '2', '2.000'],
  ['穿楼板套管', '刚性防水套管', 'DN70', '', '4', '4.000'],
  ['过滤器', '过滤器', 'DN100', '6 + 1 + 1 + 2 +...', '', '14.000'],
  ['流量开关', '流量开关', 'DN100', '2', '', '2.000'],
  ['压力表', '压力表', 'DN70', '1', '', '1.000'],
];

const qHead = 'border-b border-r border-[#c0c8d4] bg-[#efefef] font-normal text-[#333]';
const qCell = 'border-b border-r border-[#d4d4d4] pb-1 pl-[3px]';

const QuantityPanel = () => (
  <Panel title="表格输入" className="h-[433px] shrink-0">
    <div className="flex h-8 shrink-0 items-center overflow-hidden pb-[2px] pl-[5px] pr-px">
      <Tool icon={<AddBoxIcon />} label="添加" width="w-[67px]" caret />
      <Tool icon={<CopyIcon />} label="复制" width="w-[58px]" />
      <Tool icon={<DeleteIcon />} label="删除" width="w-[58px]" />
      <Tool icon={<UpIcon />} label="上移" width="w-[67px]" caret />
      <Tool icon={<FilterIcon />} label="过滤" width="w-[69px]" caret />
      <Tool icon={<SortIcon />} label="排序" width="w-[68px]" caret />
      <Tool icon={<MarkIcon />} label="提标识" width="w-[66px]" />
      <button type="button" className="flex h-6 w-[77px] shrink-0 items-center gap-[3px] rounded-[3px] border border-[#4a9ae8] bg-[#e3f1ff] pl-[3px] text-[#0f78e0]">
        <CountIcon />数数量<span className="pl-[6px]"><Caret /></span>
      </button>
      <div className="w-[6px] shrink-0" />
      <Tool icon={<TableFindIcon />} label="图元反查" width="w-[82px]" />
      <Tool icon={<BrushIcon />} label="删除标记" width="w-[82px]" />
      <Tool icon={<HideIcon />} label="隐藏窗体" width="w-[82px]" />
      <Tool icon={<PageSetIcon />} label="页面设置" width="w-[82px]" caret />
      <button type="button" aria-label="更多" className="ml-auto"><MoreIcon /></button>
    </div>
    <div className="flex min-h-0 grow border-t border-[#c4c6ca] bg-white">
      <div className="flex min-w-0 grow flex-col">
        <table className="w-full table-fixed border-separate border-spacing-0 whitespace-nowrap">
          <colgroup>
            <col className="w-[25px]" /><col className="w-[81px]" /><col className="w-[81px]" /><col className="w-[81px]" />
            <col className="w-[81px]" /><col className="w-[81px]" /><col className="w-[81px]" /><col className="w-[111px]" />
            <col /><col className="w-[61px]" /><col className="w-[66px]" /><col className="w-[42px]" />
          </colgroup>
          <thead>
            <tr className="h-[35px]">
              <th rowSpan={2} className={`${qHead} bg-[#ecf0f6]`} aria-label="序号" />
              <th rowSpan={2} className={qHead}>楼层</th>
              <th rowSpan={2} className={qHead}>名称</th>
              <th rowSpan={2} className={qHead}>类型</th>
              <th rowSpan={2} className={qHead}>材质</th>
              <th rowSpan={2} className="border-b border-r border-[#c0c8d4] bg-[#80bbfa] font-bold text-[#333]">规格型号</th>
              <th rowSpan={2} className={qHead}>系统类型</th>
              <th rowSpan={2} className={`${qHead} leading-[17px]`}>提取量表达式(单<br />位：套/台/个/m)</th>
              <th rowSpan={2} className={qHead}>手工量表达式(单位：套/台/个/m)</th>
              <th rowSpan={2} className={qHead}>倍数</th>
              <th className={qHead}>工程量</th>
              <th rowSpan={2} className="border-b border-[#c0c8d4] bg-[#efefef] font-normal text-[#333]">核对</th>
            </tr>
            <tr className="h-[35px]"><th className={`${qHead} leading-[17px]`}>数量<br />[SL]</th></tr>
          </thead>
          <tbody>
            {quantityRows.map(([name, type, spec, extract, manual, total], index) => {
              const selected = index === 6;
              return (
                <tr key={index} className="h-[27px] bg-[#fbfffe]">
                  <td className={`${cell} text-center ${selected ? 'bg-[#80bbfa] font-bold text-white' : 'bg-[#efefef] text-[#444]'}`}>{index + 49}</td>
                  <td className={qCell}>首层</td>
                  <td className={qCell}>{name}</td>
                  <td className={qCell}>{type}</td>
                  <td className={qCell} />
                  <td className={`${qCell} ${selected ? 'bg-[#c0e3fa] outline-3 -outline-offset-1 outline-[#7f7f7f]' : ''}`}>{spec}</td>
                  <td className={qCell}>给水系统</td>
                  <td className={qCell}>{extract}</td>
                  <td className={qCell}>{manual}</td>
                  <td className={qCell}>1</td>
                  <td className={qCell}>{total}</td>
                  <td className="border-b border-[#d4d4d4] pl-[3px] text-center"><Check label={`核对 ${index + 49}`} /></td>
                </tr>
              );
            })}
          </tbody>
        </table>
        <div className="h-3 w-[25px] shrink-0 bg-[#efefef]" />
        <div className="mt-1 pl-[10px] pr-[95px]"><div className="h-2 rounded-full bg-[#cbcbcb]" /></div>
      </div>
      <div className="flex w-[14px] shrink-0 justify-center pt-[279px]"><div className="h-[63px] w-2 rounded-full bg-[#cbcbcb]" /></div>
    </div>
  </Panel>
);

// ---------- right column ----------

const drawings = [
  ['地下二层...', '第-2层', '-2.1'],
  ['地下一层...', '第-1层', '-1.1'],
  ['首层给排...', '首层', '1.1'],
  ['二层给排...', '第2层', '2.1'],
  ['三层给排...', '第3层', '3.1'],
  ['四层给排...', '第4层', '4.1'],
  ['五层至九...', '第5层', '5.1'],
];

const Toggle = () => (
  <span className="relative z-[1] flex size-[13px] shrink-0 items-center justify-center rounded-[2px] border border-[#777] bg-white">
    <span className="h-px w-[5px] bg-black" />
  </span>
);

const DrawingPanel = () => (
  <Panel title="图纸管理" className="h-[307px] shrink-0">
    <div className="flex h-7 shrink-0 items-center overflow-hidden pl-[5px] pt-[2px]">
      <Tool icon={<SheetIcon kind="add" />} label="添加" width="w-[57px]" />
      <Tool icon={<SheetIcon kind="locate" />} label="定位" width="w-[68px]" caret />
      <Tool icon={<SplitIcon />} label="手动分割" width="w-[92px]" caret />
      <Tool icon={<CopyIcon muted />} label="复制" width="w-[58px]" disabled />
      <Tool icon={<SheetIcon kind="remove" />} label="删除" width="w-[58px]" />
      <button type="button" aria-label="更多" className="ml-auto"><MoreIcon /></button>
    </div>
    <label className="flex h-[25px] shrink-0 items-center border-y border-[#c4c6ca] bg-white pl-1 pr-[6px]">
      <input aria-label="搜索图纸" placeholder="搜索图纸..." className="min-w-0 grow outline-none placeholder:text-[#777]" />
      <SearchIcon />
    </label>
    <div className="mt-[3px] flex min-h-0 grow overflow-hidden bg-white">
      <table className="h-fit w-[307px] table-fixed border-separate border-spacing-0 whitespace-nowrap leading-[18px] text-[#333]">
        <colgroup><col className="w-[23px]" /><col className="w-[111px]" /><col className="w-[51px]" /><col className="w-[71px]" /><col className="w-[51px]" /></colgroup>
        <thead>
          <tr className="h-[21px]">
            <th className={`${cell} bg-[#e9eff7]`} aria-label="序号" />
            <th className="border-b border-r border-[#6aa7ea] bg-[#80bbfa] font-semibold text-white">图纸名称</th>
            <th className={head}>比例</th>
            <th className={head}>楼层</th>
            <th className={head}>楼层编号</th>
          </tr>
        </thead>
        <tbody>
          <tr className="h-[21px]">
            <td className={`${cell} bg-[#80bbfa] text-center font-bold text-white`}>1</td>
            <td className="border-b-2 border-r-2 border-[#7f7f7f] pl-[2px]"><span className="flex items-center gap-[6px]"><Toggle />培训中心给排...</span></td>
            <td className={cell} /><td className={cell} /><td className={cell} />
          </tr>
          <tr className="h-[21px] bg-[#008000]">
            <td className={`${cell} bg-[#efefef] text-center`}>2</td>
            <td className={`${cell} pl-2`}>
              <span className="-my-px flex h-5 items-center gap-[6px] border-l border-black pl-[3px]"><Toggle />模型</span>
            </td>
            <td className={`${cell} text-center`}>1:1</td>
            <td className={`${cell} text-center`}>首层</td>
            <td className={cell} />
          </tr>
          {drawings.map(([name, floor, code], index) => (
            <tr key={code} className="h-[21px]">
              <td className={`${cell} bg-[#efefef] text-center`}>{index + 3}</td>
              <td className={`${cell} pl-2`}>
                <span className="flex h-5 border-l border-black pl-[9px]">
                  <span className="flex items-center gap-[6px] border-l border-black"><span className="h-px w-4 bg-black" />{name}</span>
                </span>
              </td>
              <td className={`${cell} text-center`}>1:1</td>
              <td className={`${cell} text-center`}>{floor}</td>
              <td className={`${cell} pl-1`}>{code}</td>
            </tr>
          ))}
          {/* next row is only just in view */}
          <tr className="h-[21px]">
            <td className={`${cell} bg-[#efefef]`} />
            <td className={`${cell} pl-2`}>
              <span className="flex h-5 border-l border-black pl-[9px]"><span className="border-l border-black" /></span>
            </td>
            <td className={cell} /><td className={cell} /><td className={cell} />
          </tr>
        </tbody>
      </table>
      <div className="h-[21px] grow bg-[#efefef]" />
      <div className="w-[15px] shrink-0 pl-1 pt-[10px]"><div className="h-[26px] w-2 rounded-full bg-[#cbcbcb]" /></div>
    </div>
  </Panel>
);

const scopes = ['当前楼层', '相邻楼层', '自定义楼层', '全部楼层'];
const floors = ['第18层', '屋顶', '第16层', '第15层', '第14层', '第13层', '第12层'];

const DisplayPanel = () => (
  <Panel title="显示设置" className="h-[338px] shrink-0">
    <div className="flex h-[26px] shrink-0 items-end text-[#111]">
      <button type="button" className="h-6 w-[72px] border border-b-0 border-[#c4c6ca] bg-[#f3f3f3]">楼层显示</button>
      <button type="button" className="h-6 w-[71px]">分层显示</button>
      <button type="button" className="h-6 w-[72px]">图元显示</button>
    </div>
    <div className="grid h-[29px] shrink-0 grid-cols-4 items-center border-b border-[#c4c6ca] pl-[6px]">
      {scopes.map((scope) => (
        <label key={scope} className="flex items-center gap-[7px] whitespace-nowrap text-[#111]">
          <input
            type="radio"
            name="scope"
            defaultChecked={scope === '当前楼层'}
            className="size-3.5 shrink-0 appearance-none rounded-full border border-[#8c8c8c] bg-white checked:bg-[#4e9ffa] checked:shadow-[inset_0_0_0_3px_#fff]"
          />
          {scope}
        </label>
      ))}
    </div>
    <div className="flex min-h-0 grow border-b border-[#c4c6ca] bg-white text-[#777]">
      <div className="grow pt-1">
        <label className="flex h-[26px] items-center gap-[6px] pl-2">
          <TreeArrow />
          <span className="pl-[5px]"><Check label="全部楼层" disabled /></span>
          全部楼层
        </label>
        {floors.map((floor) => (
          <label key={floor} className="flex h-[26px] items-center gap-[5px] pl-[46px]"><Check label={floor} disabled />{floor}</label>
        ))}
      </div>
      <div className="w-[9px] shrink-0 pt-3"><div className="h-[73px] w-2 rounded-full bg-[#cbcbcb]" /></div>
    </div>
    <label className="flex h-[38px] shrink-0 items-center gap-[7px] pt-[2px] text-[#111]"><Check label="其他单项工程图元亮显" />其他单项工程图元亮显</label>
  </Panel>
);

const layers = ['已提取的CAD图层', 'CAD原始图层'];

const LayerPanel = () => (
  <Panel title={<><b>CAD</b>图层</>} className="grow">
    <div className="flex h-[31px] shrink-0 items-center gap-[14px] overflow-hidden whitespace-nowrap border-t border-[#c4c6ca] pl-1 text-[#333]">
      <button type="button">显示指定图层</button>
      <button type="button">隐藏指定图层</button>
      <button type="button">显示指定图元</button>
      <button type="button">隐藏指定图元</button>
    </div>
    <div className="h-[6px] shrink-0 bg-[#d3d4da]" />
    <div className="flex min-h-0 grow border-t border-[#c4c6ca] bg-white">
      <table className="h-fit w-[223px] table-fixed border-separate border-spacing-0 text-[#333]">
        <colgroup><col className="w-9" /><col className="w-9" /><col /></colgroup>
        <thead>
          <tr className="h-[21px]"><th className={head}>开/关</th><th className={head}>颜色</th><th className={head}>名称</th></tr>
        </thead>
        <tbody>
          {layers.map((layer, index) => (
            <tr key={layer} className="h-[26px]">
              <td className={`${cell} pt-[6px] text-center`}>
                {index === 0 ? (
                  <input type="checkbox" aria-label={layer} className="mx-auto block size-3.5 appearance-none rounded-[2px] border border-[#777] bg-[#9cc9fb] shadow-[inset_0_0_0_1px_#fff,inset_0_0_0_2px_#4e9ffa]" />
                ) : <Check label={layer} on />}
              </td>
              <td className={`${cell} pb-[2px]`}><svg width="7" height="9" viewBox="0 0 7 9" className="mx-auto"><path d="M.5.500h2.500l3 4-3 4H.500z" stroke="#aaa" fill="#fff" /></svg></td>
              <td className={`${cell} pb-[2px] pl-1`}>{layer}</td>
            </tr>
          ))}
        </tbody>
      </table>
      <div className="h-[21px] grow bg-[#efefef]" />
    </div>
  </Panel>
);

// ---------- status bar ----------

const statusButton = 'flex h-[25px] shrink-0 items-center justify-center gap-1 border border-[#979797] bg-[#cfcfd1]';
const statusActive = 'flex h-[25px] shrink-0 items-center justify-center gap-1 border border-[#2b8be6] bg-white';

const StatusBar = () => (
  <footer className="shrink-0 whitespace-nowrap text-[#222]">
    <div className="flex h-[29px] items-center bg-[#dedee0] pl-[2px] pt-px">
      <span className="w-[263px] shrink-0">X = 1024783.31 Y = 433092.78</span>
      <span className="w-[83px] shrink-0">层高：4.8</span>
      <span className="w-[103px] shrink-0">底标高：0</span>
      <span className="w-[103px] shrink-0">0</span>
      <span className="w-[103px] shrink-0">隐藏：0</span>
      <div className="flex gap-[3px]">
        <button type="button" aria-label="正交" className={`${statusActive} w-[25px]`}><Icon><path d="M3.500 1v12h12M3.500 8.500h4v4" stroke={BLUE} /></Icon></button>
        <button type="button" aria-label="捕捉" className={`${statusActive} w-9`}><Icon size={18} box={18}><path d="M3 3h13v13H3z" stroke={BLUE} /><path d="M0 0h5v5H0z" fill={ORANGE} /></Icon><Caret /></button>
        <button type="button" aria-label="视图" className={`${statusButton} w-9`}><Icon><path d="M1 5l6-3.500L14 4v8l-6 3-7-3zM1 5l7 2.500L14 4M8 7.500V15" stroke="#444" /></Icon><Caret /></button>
        <button type="button" aria-label="交点" className={`${statusButton} w-[25px]`}><Icon><path d="M1 1l14 14M15 1L1 15" stroke="#666" strokeWidth="1" /></Icon></button>
        <button type="button" aria-label="垂点" className={`${statusButton} w-9`}><Icon><path d="M1 14L12 2M1 14h14" stroke="#444" /><circle cx="8" cy="9" r="1.500" fill="#444" /></Icon><Caret /></button>
        <button type="button" aria-label="偏移" className={`${statusButton} w-9`}><Icon><path d="M3 2v6M0 5h6M3 12h12M12 9.500v5" stroke="#444" strokeWidth="1.600" /></Icon><Caret /></button>
        <button type="button" className={`${statusButton} w-[73px]`}>跨类型选择</button>
        <button type="button" className={`${statusButton} w-[61px]`}>折线选择</button>
      </div>
      <span className="w-[119px] shrink-0 pl-[6px]">CAD图亮度：100%</span>
      <button type="button" aria-label="调暗" className={`${statusButton} w-[25px]`}><Icon><circle cx="8" cy="8" r="6.500" stroke="#666" fill="#eee" /><path d="M5 8h6" stroke="#333" strokeWidth="1.600" /></Icon></button>
      <div className="flex w-11 shrink-0 justify-end"><div className="h-[22px] w-[10px] bg-[#0078d7]" /></div>
      <button type="button" aria-label="调亮" className={`${statusButton} w-[25px]`}><Icon><circle cx="8" cy="8" r="6.500" stroke="#666" fill="#eee" /><path d="M5 8h6M8 5v6" stroke="#333" strokeWidth="1.600" /></Icon></button>
      <span>左键点选或拉框选择图例和文字（可不选），右键确认或ESC退出</span>
    </div>
    <div className="flex h-[9px] justify-between overflow-hidden border-t border-white bg-linear-to-r from-[#d9d6e4] via-[#e6d3dc] to-[#d8d5e2]">
      <div className="ml-[539px] w-12 bg-[#f1eaef]" />
      <span className="pr-[78px] pt-[3px] leading-4">0:00</span>
    </div>
  </footer>
);

const SideGrip = ({ flip }: { flip?: boolean }) => (
  <div className="w-1 shrink-0 bg-white pt-[154px]">
    <div className="flex h-[100px] items-center bg-[#5f6b7a]">
      <svg width="4" height="6" viewBox="0 0 4 6"><path d={flip ? 'M0 0l3 3-3 3z' : 'M4 0L1 3l3 3z'} fill="#c9ccd1" /></svg>
    </div>
  </div>
);

export default function App() {
  return (
    <div className="flex h-screen min-h-[1000px] flex-col overflow-hidden bg-white font-['Open_Sans','Noto_Sans_CJK_SC',sans-serif] text-[12px] leading-4 text-[#111]">
      <Header />
      <Ribbon />
      <FilterBar />
      <main className="flex min-h-0 grow">
        <NavPanel />
        <div className="ml-1 flex w-[372px] shrink-0 flex-col gap-1">
          <ComponentPanel />
          <PropertyPanel />
        </div>
        <SideGrip />
        <div className="flex min-w-0 grow flex-col">
          <Canvas />
          <div className="flex h-1 shrink-0 justify-center">
            <div className="flex w-[100px] justify-center bg-[#5f6b7a]"><svg width="6" height="4" viewBox="0 0 6 4"><path d="M0 0h6L3 3z" fill="#c9ccd1" /></svg></div>
          </div>
          <QuantityPanel />
        </div>
        <SideGrip flip />
        <div className="flex w-[366px] shrink-0 flex-col gap-1">
          <DrawingPanel />
          <DisplayPanel />
          <LayerPanel />
        </div>
      </main>
      <StatusBar />
    </div>
  );
}
